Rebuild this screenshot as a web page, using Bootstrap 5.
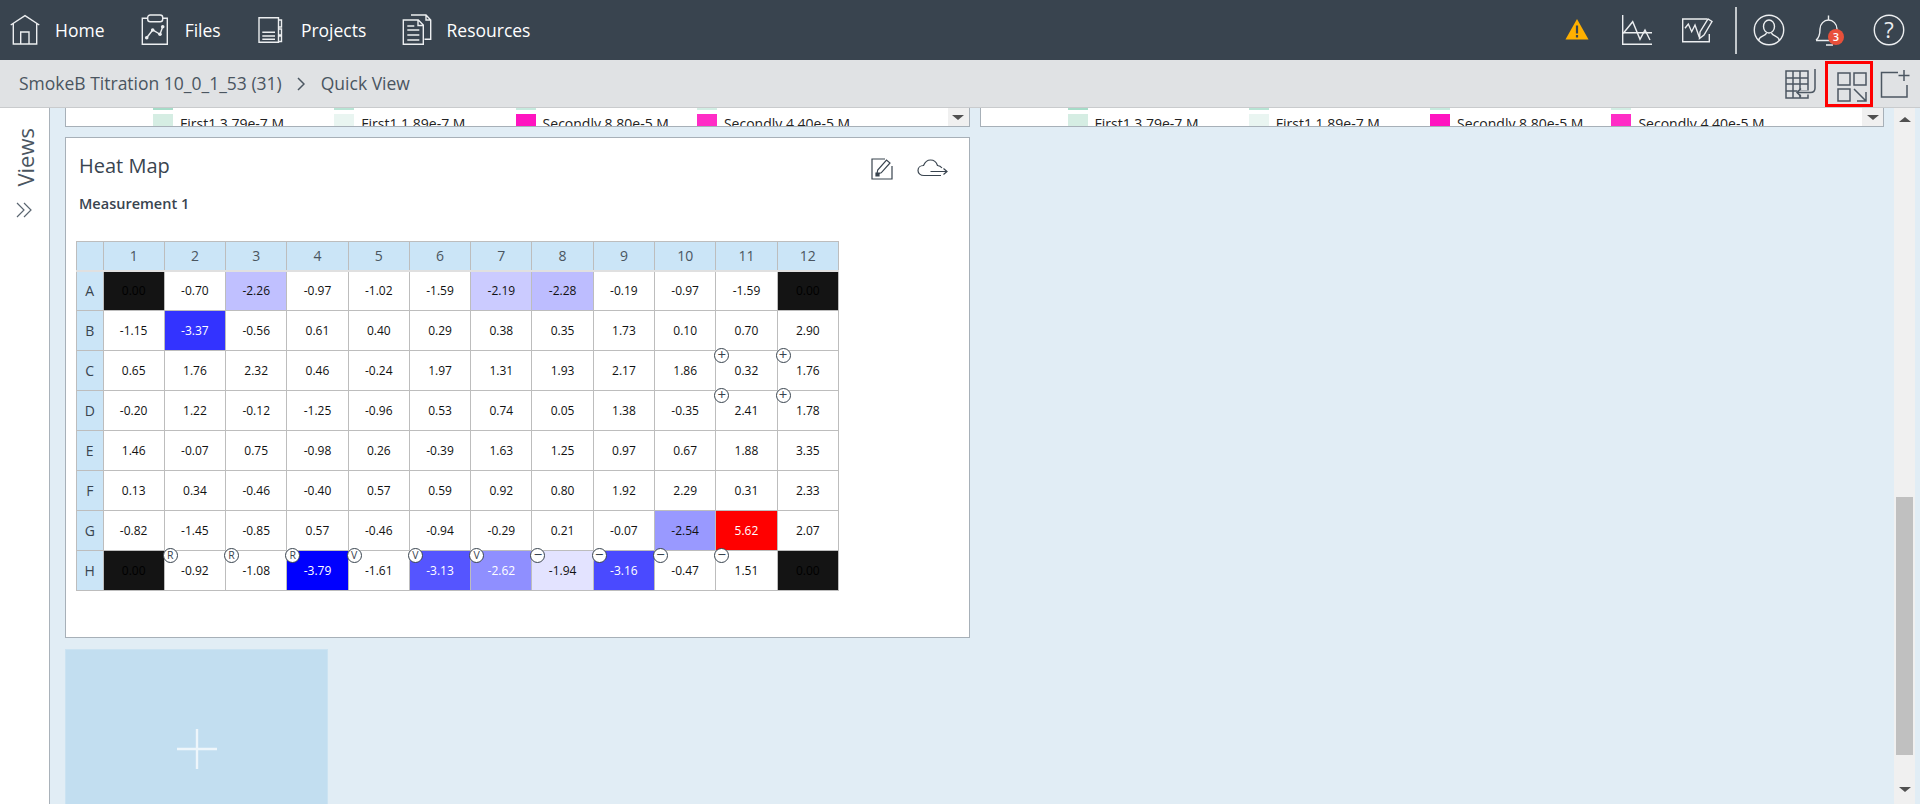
<!DOCTYPE html>
<html lang="en">
<head>
<meta charset="utf-8">
<title>Quick View</title>
<link rel="stylesheet" href="https://cdn.jsdelivr.net/npm/bootstrap@5.3.0/dist/css/bootstrap.min.css">
<style>
html,body{height:804px;overflow:hidden}
body{font-family:"Open Sans","Liberation Sans",sans-serif;background:#e1edf5;color:#39444f}
.qv-top{height:60px;background:#39444f;padding-left:9px;flex:none}
.qv-top svg{width:32px;height:32px;flex:none;fill:none;stroke:#eceef0;stroke-width:1.4}
.qv-link{color:#fff;font-size:17.5px;text-decoration:none;display:flex;align-items:center;gap:14px;margin-right:34.2px}
.qv-tools{margin-left:auto;padding-right:15px;gap:28px}
.qv-warn{stroke:none!important;fill:#ffb000!important}
.qv-sep{width:2px;height:47px;background:#c3c8cc;margin:0 -12px 0 -6px}
.qv-bell{position:relative;width:32px;height:32px}
.qv-count{position:absolute;left:15px;top:15px;width:16px;height:16px;border-radius:50%;background:#e8503a;color:#fff;font-size:11px;line-height:16px;text-align:center;font-weight:600}
.qv-help{fill:#eceef0;stroke:none;font-size:22px;font-family:"Open Sans",sans-serif}
.qv-bar{height:48px;flex:none;background:#e0e2e4;border-bottom:1px solid #c9cbcd;padding-left:19px;font-size:17.5px;color:#4a5560}
.qv-bar svg{fill:none;stroke:#4c5762;stroke-width:1.5;width:32px;height:32px;flex:none}
.qv-bar svg.qv-crumb-sep{margin:0 16px 0 15px;width:8px;height:14px}
.qv-actions{margin-left:auto;padding-right:9px}
.qv-active{width:48px;height:46px;border:3px solid #f00;margin:0 6px 0 8px;padding:7px 0 0 8px}
.qv-main{flex:1 1 auto;min-height:0;overflow:hidden}
.qv-side{width:50px;flex:none;background:#fff;border-right:1px solid #a9b2ba;padding-top:20px;gap:15px}
.qv-side span{font-size:22px;line-height:20px;writing-mode:vertical-rl;transform:rotate(180deg);color:#4a5560}
.qv-side svg{width:18px;height:16px;fill:none;stroke:#5a6570;stroke-width:1.2}
.qv-content{flex:1 1 auto;min-width:0;padding:0 10px 0 15px;display:grid;grid-template-columns:1fr 1fr;column-gap:10px;row-gap:10px;align-content:start}
.qv-strip{height:19px;overflow:hidden;background:#fff;border:1px solid #a7b0b8;border-top:0;display:flex}
.qv-legend{flex:1 1 auto;padding-left:87px;display:flex}
.qv-item{width:181.3px;flex:none}
.qv-tick{width:20px;height:2px}
.qv-entry{display:flex;gap:7px;margin-top:4px;font-size:14px;line-height:19px;color:#222;white-space:nowrap}
.qv-chip{width:20px;height:16px;flex:none}
.qv-drop{width:21px;flex:none;background:#f0f0f0;display:flex;justify-content:center;padding-top:7px}
.qv-tri-d{width:0;height:0;border-left:6px solid transparent;border-right:6px solid transparent;border-top:5px solid #505050}
.qv-tri-u{width:0;height:0;border-left:6px solid transparent;border-right:6px solid transparent;border-bottom:5px solid #505050}
.qv-panel{border:1px solid #a7b0b8;background:#fff;padding:14px 0 46px 10px;border-radius:0}
.qv-title{font-size:20px;line-height:27px;padding-left:3px;color:#39444f;margin-top:-1px}
.qv-head svg{fill:none;stroke:#39444f;stroke-width:1.2;margin-top:6px}
.qv-head{margin-right:20px}
.qv-sub{font-size:14.5px;line-height:19px;font-weight:600;padding-left:3px;margin:14px 0 28px;color:#39444f}
table.qv-heat{width:763px;table-layout:fixed;border-collapse:collapse;margin:0}
table.qv-heat th,table.qv-heat td{padding:0;border:1px solid #bdbdbd;text-align:center;vertical-align:middle;font-weight:400;box-shadow:none}
table.qv-heat thead th{height:29px;background:#cbe5f7;font-size:14px;color:#4a5560;border-bottom:2px solid #e0e0e0}
table.qv-heat tbody th{background:#cbe5f7;font-size:14px;color:#39444f}
table.qv-heat tbody td{height:40px;font-size:12px;color:#111;background:#fff;position:relative}
table.qv-heat tbody td.h-k{background:#141414;color:#000}
table.qv-heat tbody td.h-a{background:#c0c0ff}
table.qv-heat tbody td.h-b{background:#cbcbff}
table.qv-heat tbody td.h-c{background:#bdbdff}
table.qv-heat tbody td.h-d{background:#33f;color:#fff}
table.qv-heat tbody td.h-e{background:#00f;color:#fff}
table.qv-heat tbody td.h-f{background:#55f;color:#fff}
table.qv-heat tbody td.h-g{background:#8f8fff;color:#fff}
table.qv-heat tbody td.h-h{background:#e3e3ff}
table.qv-heat tbody td.h-i{background:#4a4aff;color:#fff}
table.qv-heat tbody td.h-j{background:#99f}
table.qv-heat tbody td.h-r{background:#f00;color:#fff}
.qv-pin{position:absolute;left:-2px;top:-3px;width:15px;height:15px;border:1px solid #39444f;border-radius:50%;background:#fff;color:#39444f;font-size:10.5px;line-height:13px;text-align:center}
.qv-pin.qv-sym{font-size:15px;line-height:11.5px}
.qv-add{width:263px;height:200px;margin-top:1px;background:#c2def0;border:1px solid #cbe3f2;display:flex;align-items:center;justify-content:center;grid-column:1}
.qv-add svg{width:42px;height:42px;stroke:#eef6fb;stroke-width:2.4;fill:none}
.qv-scroll{width:21px;flex:none;margin-right:5px;background:#f0f0f0;display:flex;flex-direction:column;align-items:center}
.qv-thumb{width:17px;height:258px;background:#c0c0c0;margin-top:375px}
.qv-scroll .qv-tri-u{margin-top:9px}
.qv-scroll .qv-tri-d{margin-top:32px}
</style>
</head>
<body class="d-flex flex-column">

<nav class="qv-top d-flex align-items-center">
  <a class="qv-link" href="#"><svg viewBox="0 0 32 32"><path d="M1.7 11 16 1.7 30.3 11M4.3 9v21h23.4V9M11.7 30V18H20v12"/></svg>Home</a>
  <a class="qv-link" href="#"><svg viewBox="0 0 32 32"><path d="M8.7 4.3H3.3v26h25v-26h-5.3"/><rect x="8.7" y="1" width="15" height="6.7" rx="2.5"/><path d="M7.7 23.7 13.7 16 21 20.3 23.7 12.7"/><g fill="#eceef0" stroke="none"><circle cx="7.7" cy="23.7" r="1.8"/><circle cx="13.7" cy="16" r="1.8"/><circle cx="21" cy="20.3" r="1.8"/><circle cx="23.7" cy="12.7" r="1.8"/></g></svg>Files</a>
  <a class="qv-link" href="#"><svg viewBox="0 0 32 32"><path d="M23.5 3.7H4v24.6h19.5zM7.3 18.3H20M7.3 22H20M7.3 25.3H20"/><path d="M23.5 6h3v7h-3M23.5 15h3v6h-3M23.5 22h3v5.5h-3"/></svg>Projects</a>
  <a class="qv-link" href="#"><svg viewBox="0 0 32 32"><path d="M2.3 6h15l5 5v19.3h-20zM17 6v5.500h5.300M6.300 12h7M6.300 16h12M6.300 21h12M6.300 26h12"/><path d="M10 1h15l4.700 5v19.300H23.500M25 1v5h4.700"/></svg>Resources</a>
  <div class="qv-tools d-flex align-items-center">
    <svg viewBox="0 0 32 32"><path class="qv-warn" d="M16 5 27.500 25.500H4.500z"/><path d="M16 11.500v8M16 21v2.500" stroke="#39444f" stroke-width="2.200"/></svg>
    <svg viewBox="0 0 32 32"><path d="M1.700 1v29.300H31M1.700 18.700H31"/><path d="M2.300 19.300 11.700 7.700 19 25.300 24 16 29 26"/></svg>
    <svg viewBox="0 0 32 32"><path d="M26 5H1.700v22.700h26.600V20"/><path d="M4 14.300 7.300 10 10.700 17.700 14 11 18.300 23.300"/><path d="M18.500 24.500 19 18 27 5l4 2.500L23 21z"/></svg>
    <div class="qv-sep"></div>
    <svg viewBox="0 0 32 32"><circle cx="16" cy="16" r="14.700"/><ellipse cx="16" cy="12.500" rx="5.500" ry="6.500"/><path d="M5.500 26.500c1-5 7-4 8-7.500M26.500 26.500c-1-5-7-4-8-7.500"/></svg>
    <div class="qv-bell"><svg viewBox="0 0 32 32"><path d="M3 26c3-2 4-6 4-11 0-5 4-9 8.500-9S24 10 24 15v5M3 26.500h15M13 31h7M15.500 6V1.500"/></svg><span class="qv-count">3</span></div>
    <svg viewBox="0 0 32 32"><circle cx="16" cy="16" r="14.700"/><text class="qv-help" x="16" y="24" text-anchor="middle">?</text></svg>
  </div>
</nav>

<div class="qv-bar d-flex align-items-center">
  <span>SmokeB Titration 10_0_1_53 (31)</span>
  <svg class="qv-crumb-sep" viewBox="0 0 8 14"><path d="M1 1l6 6-6 6"/></svg>
  <span>Quick View</span>
  <div class="qv-actions d-flex align-items-center">
    <svg viewBox="0 0 32 32"><path d="M1 3h22v27H1zM1 10h22M1 16h22M1 23h22M8 3v27M15 3v27"/><path d="M30 1v19q0 4.500-4.500 4.500H12" stroke="#e0e2e4" stroke-width="4"/><path d="M30 1v19q0 4.500-4.500 4.500H12M16 20.500l-4 4 4 4"/></svg>
    <div class="qv-active"><svg viewBox="0 0 32 32"><path d="M2 2h12v12H2zM18 2h12v12H18zM2 18h12v12H2zM18 18 30 30M30 21v9h-9"/></svg></div>
    <svg viewBox="0 0 32 32"><path d="M19 4.500H2.500V29H28V17M25 2v11M19.500 7.500h11"/></svg>
  </div>
</div>

<div class="qv-main d-flex">
  <aside class="qv-side d-flex flex-column align-items-center">
    <span>Views</span>
    <svg viewBox="0 0 18 16"><path d="M1 1l7 7-7 7M8 1l7 7-7 7"/></svg>
  </aside>
  <div class="qv-content">
    <div class="qv-strip">
      <div class="qv-legend">
        <div class="qv-item"><div class="qv-tick" style="background:#a6dcc8"></div><div class="qv-entry"><div class="qv-chip" style="background:#d5ede3"></div>First1 3.79e-7 M</div></div>
        <div class="qv-item"><div class="qv-tick" style="background:#b8e4d4"></div><div class="qv-entry"><div class="qv-chip" style="background:#e9f5f1"></div>First1 1.89e-7 M</div></div>
        <div class="qv-item"><div class="qv-tick" style="background:#c6eade"></div><div class="qv-entry"><div class="qv-chip" style="background:#ff14c0"></div>Secondly 8.80e-5 M</div></div>
        <div class="qv-item"><div class="qv-tick" style="background:#d2eee4"></div><div class="qv-entry"><div class="qv-chip" style="background:#ff2cc6"></div>Secondly 4.40e-5 M</div></div>
      </div>
      <div class="qv-drop"><div class="qv-tri-d"></div></div>
    </div>
    <div class="qv-strip">
      <div class="qv-legend">
        <div class="qv-item"><div class="qv-tick" style="background:#a6dcc8"></div><div class="qv-entry"><div class="qv-chip" style="background:#d5ede3"></div>First1 3.79e-7 M</div></div>
        <div class="qv-item"><div class="qv-tick" style="background:#b8e4d4"></div><div class="qv-entry"><div class="qv-chip" style="background:#e9f5f1"></div>First1 1.89e-7 M</div></div>
        <div class="qv-item"><div class="qv-tick" style="background:#c6eade"></div><div class="qv-entry"><div class="qv-chip" style="background:#ff14c0"></div>Secondly 8.80e-5 M</div></div>
        <div class="qv-item"><div class="qv-tick" style="background:#d2eee4"></div><div class="qv-entry"><div class="qv-chip" style="background:#ff2cc6"></div>Secondly 4.40e-5 M</div></div>
      </div>
      <div class="qv-drop"><div class="qv-tri-d"></div></div>
    </div>

    <section class="qv-panel card">
      <div class="qv-head d-flex align-items-center">
        <div class="qv-title">Heat Map</div>
        <svg class="ms-auto" width="22" height="22" viewBox="0 0 22 22"><path d="M14 1H1v20h20V8"/><path d="M6 16l.7-4L15.500 2l3.500 3-8.800 9.800z"/><path d="M5 15h3v3H5z" fill="#39444f"/></svg>
        <svg class="ms-4" width="32" height="20" viewBox="0 0 32 20"><path d="M24 16.500H7C3.500 16.500 1 14.500 1 11.500S3.500 6.500 6.500 6.500C8 3 10.500 1 13.500 1c3.500 0 6 2.500 7 5.500 2 .2 3.500 1.200 4.500 2.500"/><path d="M13.500 12.500H30M26.500 9.500l3.500 3-3.500 3"/></svg>
      </div>
      <div class="qv-sub">Measurement 1</div>
      <table class="table qv-heat">
        <colgroup><col style="width:26.500px"><col span="12"></colgroup>
        <thead><tr><th></th><th>1</th><th>2</th><th>3</th><th>4</th><th>5</th><th>6</th><th>7</th><th>8</th><th>9</th><th>10</th><th>11</th><th>12</th></tr></thead>
        <tbody>
          <tr><th>A</th><td class="h-k">0.00</td><td>-0.70</td><td class="h-a">-2.26</td><td>-0.97</td><td>-1.02</td><td>-1.59</td><td class="h-b">-2.19</td><td class="h-c">-2.28</td><td>-0.19</td><td>-0.97</td><td>-1.59</td><td class="h-k">0.00</td></tr>
          <tr><th>B</th><td>-1.15</td><td class="h-d">-3.37</td><td>-0.56</td><td>0.61</td><td>0.40</td><td>0.29</td><td>0.38</td><td>0.35</td><td>1.73</td><td>0.10</td><td>0.70</td><td>2.90</td></tr>
          <tr><th>C</th><td>0.65</td><td>1.76</td><td>2.32</td><td>0.46</td><td>-0.24</td><td>1.97</td><td>1.31</td><td>1.93</td><td>2.17</td><td>1.86</td><td><span class="qv-pin qv-sym">+</span>0.32</td><td><span class="qv-pin qv-sym">+</span>1.76</td></tr>
          <tr><th>D</th><td>-0.20</td><td>1.22</td><td>-0.12</td><td>-1.25</td><td>-0.96</td><td>0.53</td><td>0.74</td><td>0.05</td><td>1.38</td><td>-0.35</td><td><span class="qv-pin qv-sym">+</span>2.41</td><td><span class="qv-pin qv-sym">+</span>1.78</td></tr>
          <tr><th>E</th><td>1.46</td><td>-0.07</td><td>0.75</td><td>-0.98</td><td>0.26</td><td>-0.39</td><td>1.63</td><td>1.25</td><td>0.97</td><td>0.67</td><td>1.88</td><td>3.35</td></tr>
          <tr><th>F</th><td>0.13</td><td>0.34</td><td>-0.46</td><td>-0.40</td><td>0.57</td><td>0.59</td><td>0.92</td><td>0.80</td><td>1.92</td><td>2.29</td><td>0.31</td><td>2.33</td></tr>
          <tr><th>G</th><td>-0.82</td><td>-1.45</td><td>-0.85</td><td>0.57</td><td>-0.46</td><td>-0.94</td><td>-0.29</td><td>0.21</td><td>-0.07</td><td class="h-j">-2.54</td><td class="h-r">5.62</td><td>2.07</td></tr>
          <tr><th>H</th><td class="h-k">0.00</td><td><span class="qv-pin">R</span>-0.92</td><td><span class="qv-pin">R</span>-1.08</td><td class="h-e"><span class="qv-pin">R</span>-3.79</td><td><span class="qv-pin">V</span>-1.61</td><td class="h-f"><span class="qv-pin">V</span>-3.13</td><td class="h-g"><span class="qv-pin">V</span>-2.62</td><td class="h-h"><span class="qv-pin qv-sym">−</span>-1.94</td><td class="h-i"><span class="qv-pin qv-sym">−</span>-3.16</td><td><span class="qv-pin qv-sym">−</span>-0.47</td><td><span class="qv-pin qv-sym">−</span>1.51</td><td class="h-k">0.00</td></tr>
        </tbody>
      </table>
    </section>

    <div class="qv-add"><svg viewBox="0 0 42 42"><path d="M21 1v40M1 21h40"/></svg></div>
  </div>
  <div class="qv-scroll">
    <div class="qv-tri-u"></div>
    <div class="qv-thumb"></div>
    <div class="qv-tri-d"></div>
  </div>
</div>
</body>
</html>
